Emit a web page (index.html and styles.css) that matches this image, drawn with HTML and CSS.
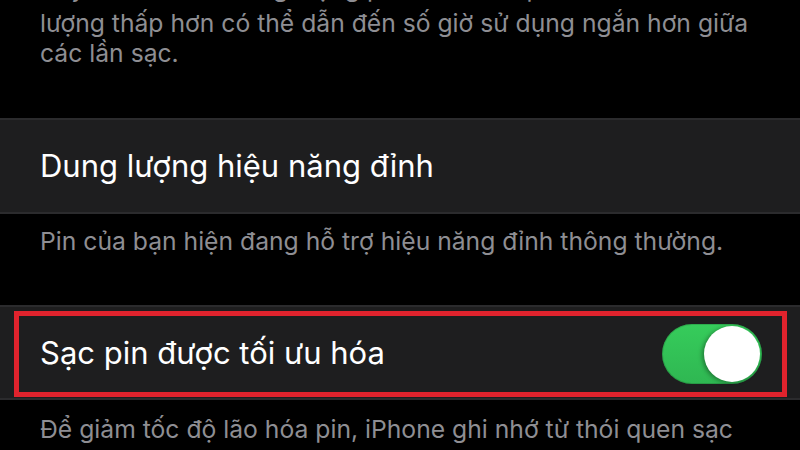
FILE: index.html
```html
<!DOCTYPE html>
<html lang="vi">
<head>
<meta charset="utf-8">
<link rel="stylesheet" href="styles.css">
</head>
<body>
<main class="screen">
  <p class="note note-top"><span class="line-cut">Đây là thước đo dung lượng pin so với khi pin còn mới. Pin có dung</span>lượng thấp hơn có thể dẫn đến số giờ sử dụng ngắn hơn giữa<br>các lần sạc.</p>
  <section class="cell">
    <span class="cell-title">Dung lượng hiệu năng đỉnh</span>
  </section>
  <p class="note note-mid">Pin của bạn hiện đang hỗ trợ hiệu năng đỉnh thông thường.</p>
  <section class="cell cell-toggle">
    <div class="highlight">
      <span class="cell-title">Sạc pin được tối ưu hóa</span>
      <span class="switch" role="switch" aria-checked="true"><span class="knob"></span></span>
    </div>
  </section>
  <p class="note note-bottom">Để giảm tốc độ lão hóa pin, iPhone ghi nhớ từ thói quen sạc</p>
</main>
</body>
</html>
```
FILE: styles.css
```css
*, *::before, *::after {
  box-sizing: border-box;
}
html, body {
  margin: 0;
  padding: 0;
  background: #000;
}
.screen {
  width: 800px;
  height: 450px;
  overflow: hidden;
  background: #000;
  font-family: Inter, "Noto Sans", sans-serif;
  display: flex;
  flex-direction: column;
}
.screen > * {
  flex: none;
}
.note {
  margin: 0;
  padding: 0 40px;
  color: #8e8e93;
  font-size: 24.7px;
  line-height: 30px;
  white-space: nowrap;
}
.note-top {
  margin-top: -32px;
  margin-bottom: 50px;
}
.line-cut {
  display: block;
  line-height: 40px;
}
.cell {
  background: #1e1e1f;
  border-top: 2px solid #2b2b2d;
  border-bottom: 2px solid #2b2b2d;
  height: 96px;
  display: flex;
  align-items: center;
  padding-left: 40px;
}
.cell-title {
  color: #fff;
  font-size: 31px;
  line-height: 36px;
}
.note-mid {
  padding-top: 12px;
  height: 91px;
}
.cell-toggle {
  height: 95px;
  padding: 4px 13px 1px 14px;
  align-items: stretch;
}
.highlight {
  flex: 1;
  border: 5px solid #e0232d;
  display: flex;
  align-items: center;
  justify-content: space-between;
  padding: 0 20px 2px 21px;
}
.switch {
  width: 100px;
  height: 60px;
  border-radius: 30px;
  background: linear-gradient(#36cc5b, #2fb752);
  box-shadow: inset 0 0 0 1px rgba(0,0,0,0.15);
  position: relative;
  flex: none;
  margin-top: 2px;
}
.knob {
  position: absolute;
  right: 2px;
  top: 2px;
  width: 56px;
  height: 56px;
  border-radius: 50%;
  background: #fff;
  box-shadow: -2px 1px 4px rgba(0,0,0,0.35);
}
.note-bottom {
  padding-top: 14px;
}
```
